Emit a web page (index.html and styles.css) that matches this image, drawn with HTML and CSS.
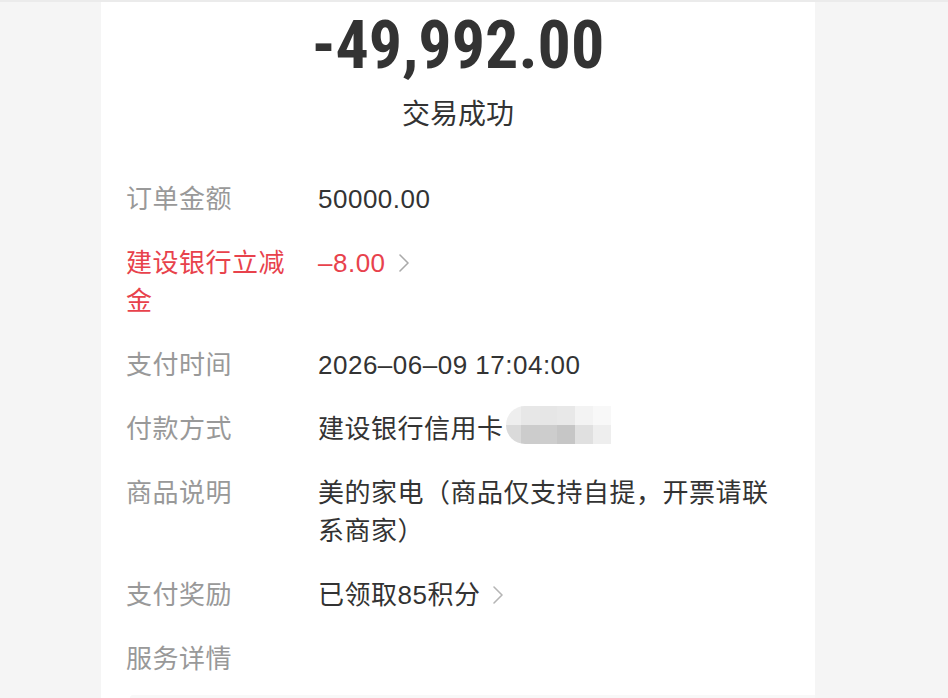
FILE: index.html
```html
<!DOCTYPE html>
<html lang="zh-CN">
<head>
<meta charset="utf-8">
<title>交易详情</title>
<link rel="stylesheet" href="styles.css">
</head>
<body>
<div class="topline"></div>
<div class="page">
  <main class="card">
    <div class="amount">-49,992.00</div>
    <div class="status">交易成功</div>
    <div class="list">
      <div class="row">
        <div class="label">订单金额</div>
        <div class="value">50000.00</div>
      </div>
      <div class="row red">
        <div class="label">建设银行立减金</div>
        <div class="value">–8.00<svg class="chev" width="12" height="20" viewBox="0 0 12 20"><polyline points="2,2 10,10 2,18" fill="none" stroke="#aaaaaa" stroke-width="1.6" stroke-linecap="round" stroke-linejoin="round"/></svg></div>
      </div>
      <div class="row">
        <div class="label">支付时间</div>
        <div class="value">2026–06–09 17:04:00</div>
      </div>
      <div class="row">
        <div class="label">付款方式</div>
        <div class="value">建设银行信用卡<span class="mask"><i class="m1"></i><i class="m2"></i><i class="m3"></i><i class="m4"></i><i class="m5"></i><i class="m6"></i><i class="n1"></i><i class="n2"></i><i class="n3"></i><i class="n4"></i><i class="n5"></i><i class="n6"></i></span></div>
      </div>
      <div class="row">
        <div class="label">商品说明</div>
        <div class="value">美的家电（商品仅支持自提，开票请联系商家）</div>
      </div>
      <div class="row">
        <div class="label">支付奖励</div>
        <div class="value">已领取85积分<svg class="chev" width="12" height="20" viewBox="0 0 12 20"><polyline points="2,2 10,10 2,18" fill="none" stroke="#b5b5b5" stroke-width="1.6" stroke-linecap="round" stroke-linejoin="round"/></svg></div>
      </div>
      <div class="row">
        <div class="label">服务详情</div>
        <div class="value"></div>
      </div>
    </div>
    <div class="next"></div>
  </main>
</div>
</body>
</html>
```

FILE: styles.css
```css
html, body {
  margin: 0;
  padding: 0;
  height: 100%;
}
body {
  background: #f5f5f5;
  font-family: "Liberation Sans", "Noto Sans CJK SC", sans-serif;
  overflow: hidden;
}
.topline {
  height: 2px;
  background: #ebebeb;
}
.page {
  padding-left: 101px;
  height: calc(100% - 2px);
}
.card {
  width: 714px;
  height: 100%;
  background: #ffffff;
  box-sizing: border-box;
  padding: 10px 37px 0 25px;
  display: flex;
  flex-direction: column;
}
.amount {
  margin-left: -25px;
  margin-right: -37px;
  text-align: center;
  font-family: "Liberation Sans Narrow", "Roboto Condensed", "Liberation Sans", sans-serif;
  font-weight: bold;
  font-size: 66px;
  line-height: 68px;
  color: #333333;
}
.status {
  margin-left: -25px;
  margin-right: -37px;
  margin-top: 13px;
  text-align: center;
  font-family: "Noto Sans CJK SC", sans-serif;
  font-size: 28px;
  line-height: 38px;
  color: #333333;
}
.list {
  margin-top: 36px;
  display: flex;
  flex-direction: column;
}
.row {
  display: grid;
  grid-template-columns: 192px 1fr;
  padding: 13px 0;
  font-size: 26px;
  line-height: 38px;
  letter-spacing: 0.5px;
}
.label {
  color: #999999;
  padding-right: 24px;
}
.value {
  color: #333333;
}
.row.red .label,
.row.red .value {
  color: #e8424c;
}
.chev {
  vertical-align: -1px;
  margin-left: 12px;
}
.mask {
  display: inline-grid;
  grid-template-columns: 15px 19px 17px 18px 18px 18px;
  grid-template-rows: 19px 19px;
  vertical-align: top;
  margin-top: -4px;
  border-radius: 19px 0 0 19px;
  overflow: hidden;
  margin-left: 2px;
  filter: blur(0.6px);
}
.mask i { display: block; }
.m1 { background: #eeeeee; }
.m2 { background: #e7e7e7; }
.m3 { background: #e6e6e6; }
.m4 { background: #e8e8e8; }
.m5 { background: #f3f3f3; }
.m6 { background: #f8f8f8; }
.n1 { background: #dadada; }
.n2 { background: #cccccc; }
.n3 { background: #cdcdcd; }
.n4 { background: #c6c6c6; }
.n5 { background: #e0e0e0; }
.n6 { background: #eeeeee; }
.next {
  margin-top: 4px;
  margin-left: 4px;
  margin-right: -37px;
  flex: 1;
  background: #f8f8f8;
  border-top-left-radius: 14px;
}
```
